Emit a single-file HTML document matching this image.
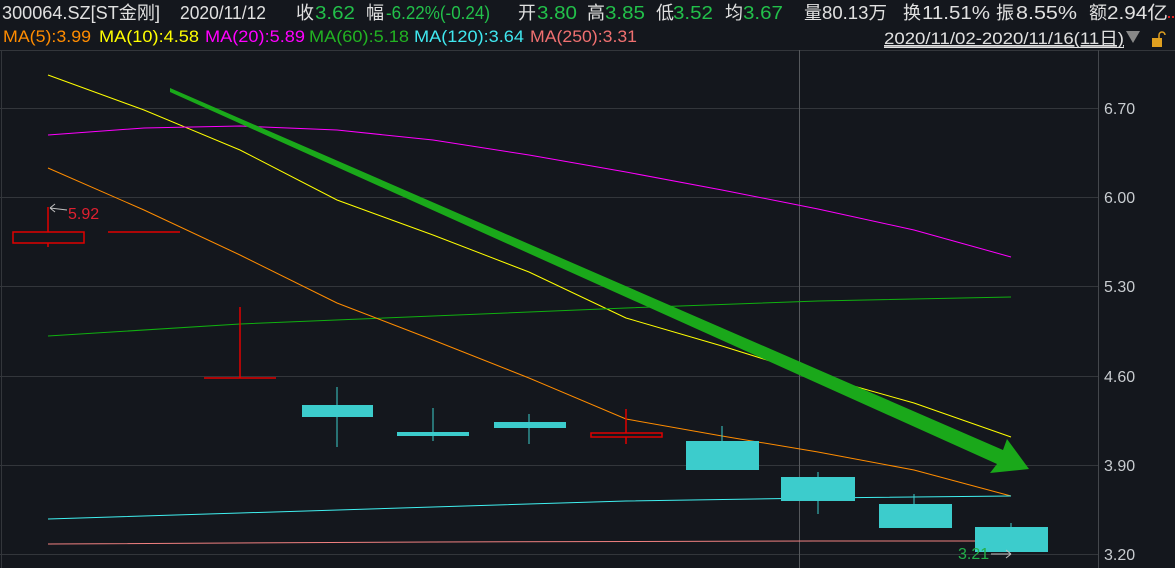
<!DOCTYPE html>
<html><head><meta charset="utf-8"><style>
body{margin:0;background:#14171d;width:1175px;height:568px;overflow:hidden;font-family:"Liberation Sans","Noto Sans CJK SC",sans-serif;}
svg{position:absolute;left:0;top:0}
</style></head><body>
<svg width="1175" height="568" xmlns="http://www.w3.org/2000/svg" font-family="Liberation Sans, Noto Sans CJK SC, sans-serif">
<rect width="1175" height="568" fill="#14171d"/>
<g font-size="18" fill="#e0e0e0">
<text x="2" y="19" textLength="158" lengthAdjust="spacingAndGlyphs">300064.SZ[ST金刚]</text>
<text x="180" y="19" textLength="86" lengthAdjust="spacingAndGlyphs">2020/11/12</text>
<text x="296" y="19">收</text><text x="315" y="19" fill="#22c04a" textLength="40" lengthAdjust="spacingAndGlyphs">3.62</text>
<text x="366" y="19">幅</text><text x="386" y="19" fill="#22c04a" textLength="104" lengthAdjust="spacingAndGlyphs">-6.22%(-0.24)</text>
<text x="518" y="19">开</text><text x="537" y="19" fill="#22c04a" textLength="40" lengthAdjust="spacingAndGlyphs">3.80</text>
<text x="587" y="19">高</text><text x="605" y="19" fill="#22c04a" textLength="40" lengthAdjust="spacingAndGlyphs">3.85</text>
<text x="656" y="19">低</text><text x="673" y="19" fill="#22c04a" textLength="40" lengthAdjust="spacingAndGlyphs">3.52</text>
<text x="725" y="19">均</text><text x="743" y="19" fill="#22c04a" textLength="40" lengthAdjust="spacingAndGlyphs">3.67</text>
<text x="804" y="19">量</text><text x="822" y="19" textLength="65" lengthAdjust="spacingAndGlyphs">80.13万</text>
<text x="903" y="19">换</text><text x="922" y="19" textLength="68" lengthAdjust="spacingAndGlyphs">11.51%</text>
<text x="996" y="19">振</text><text x="1016" y="19" textLength="61" lengthAdjust="spacingAndGlyphs">8.55%</text>
<text x="1089" y="19">额</text><text x="1107" y="19" textLength="61" lengthAdjust="spacingAndGlyphs">2.94亿</text>
</g>
<rect x="1168" y="16" width="2" height="2" fill="#e02020"/><rect x="1172" y="16" width="2" height="2" fill="#e02020"/>
<g font-size="17">
<text x="3" y="42" fill="#ff8c00" textLength="88" lengthAdjust="spacingAndGlyphs">MA(5):3.99</text>
<text x="99" y="42" fill="#ffff00" textLength="100" lengthAdjust="spacingAndGlyphs">MA(10):4.58</text>
<text x="205" y="42" fill="#ff00ff" textLength="100" lengthAdjust="spacingAndGlyphs">MA(20):5.89</text>
<text x="309" y="42" fill="#22b322" textLength="100" lengthAdjust="spacingAndGlyphs">MA(60):5.18</text>
<text x="414" y="42" fill="#40e8f0" textLength="110" lengthAdjust="spacingAndGlyphs">MA(120):3.64</text>
<text x="530" y="42" fill="#f07070" textLength="107" lengthAdjust="spacingAndGlyphs">MA(250):3.31</text>
<text x="884" y="44" fill="#e0e0e0" textLength="240" lengthAdjust="spacingAndGlyphs" text-decoration="underline">2020/11/02-2020/11/16(11日)</text>
</g>
<line x1="884" y1="47.5" x2="1124" y2="47.5" stroke="#e0e0e0"/>
<path d="M1126 31 L1140 31 L1133 43 Z" fill="#888"/>
<rect x="1152" y="38" width="10" height="9" fill="#e0a020"/>
<path d="M1159 38 V35 a3 3 0 0 1 6 0" stroke="#e0a020" stroke-width="1.5" fill="none"/>
<g stroke="#33363b" stroke-width="1">
<line x1="0" y1="50.5" x2="1175" y2="50.5"/>
<line x1="1.5" y1="50" x2="1.5" y2="568"/>
<line x1="0" y1="108.5" x2="1098" y2="108.5"/>
<line x1="0" y1="197.5" x2="1098" y2="197.5"/>
<line x1="0" y1="286.5" x2="1098" y2="286.5"/>
<line x1="0" y1="376.5" x2="1098" y2="376.5"/>
<line x1="0" y1="465.5" x2="1098" y2="465.5"/>
<line x1="0" y1="554.5" x2="1098" y2="554.5"/>
</g>
<line x1="1098.5" y1="50" x2="1098.5" y2="568" stroke="#44474c"/>
<line x1="799.5" y1="50" x2="799.5" y2="568" stroke="#55585c"/>
<g font-size="16" fill="#c8ccd0">
<text x="1104" y="114">6.70</text>
<text x="1104" y="203">6.00</text>
<text x="1104" y="292">5.30</text>
<text x="1104" y="382">4.60</text>
<text x="1104" y="471">3.90</text>
<text x="1104" y="560">3.20</text>
</g>
<g fill="none" stroke-width="1">
<polyline stroke="#ffff00" points="48,75 144,110 240,150 337,200 433,235 529,272 626,318 722,346 818,376 914,403 1011,437"/>
<polyline stroke="#ff00ff" points="48,135 144,128 240,126 337,130 433,140 529,155 626,172 722,190 818,209 914,230 1011,257"/>
<polyline stroke="#10b010" points="48,336 240,324 433,316 626,308 818,301 1011,297"/>
<polyline stroke="#ff8c00" points="48,168 144,210 240,255 337,303 433,340 529,378 626,419 722,436 818,452 914,470 1011,496"/>
<polyline stroke="#40f0f0" points="48,519 240,513 433,507 626,501 818,498 1011,496"/>
<polyline stroke="#f08080" points="48,544 433,542 818,541 1011,541"/>
</g>
<g stroke="#e00000" fill="none" stroke-width="1.5">
<line x1="48" y1="207" x2="48" y2="232"/><line x1="48" y1="243" x2="48" y2="247"/>
<rect x="13" y="232" width="71" height="11"/>
<line x1="108" y1="232" x2="180" y2="232"/>
<line x1="240" y1="307" x2="240" y2="378"/><line x1="204" y1="378" x2="276" y2="378"/>
<line x1="626" y1="409" x2="626" y2="433"/><line x1="626" y1="437" x2="626" y2="444"/>
<rect x="591" y="433" width="71" height="4"/>
</g>
<g fill="#3ccccc" stroke="#3ccccc">
<line x1="337" y1="387" x2="337" y2="447"/><rect x="302" y="405" width="71" height="12" stroke="none"/>
<line x1="433" y1="408" x2="433" y2="441"/><rect x="397" y="432" width="72" height="4" stroke="none"/>
<line x1="529" y1="414" x2="529" y2="444"/><rect x="494" y="422" width="72" height="6" stroke="none"/>
<line x1="722" y1="426" x2="722" y2="441"/><rect x="686" y="441" width="73" height="29" stroke="none"/>
<line x1="818" y1="472" x2="818" y2="514"/><rect x="781" y="477" width="74" height="24" stroke="none"/>
<line x1="914" y1="494" x2="914" y2="504"/><rect x="879" y="504" width="73" height="24" stroke="none"/>
<line x1="1011" y1="523" x2="1011" y2="527"/><rect x="975" y="527" width="73" height="25" stroke="none"/>
</g>
<path d="M67 210 L50 208 M50 208 L55 204 M50 208 L55 212" stroke="#c0c0c0" fill="none"/>
<text x="68" y="219" font-size="16" fill="#e02030">5.92</text>
<text x="958" y="559" font-size="16" fill="#22b04a">3.21</text>
<path d="M991 554 L1011 554 M1011 554 L1006 550 M1011 554 L1006 558" stroke="#c0c0c0" fill="none"/>
<polygon fill="#1aa81a" points="170,88 1003,450 1007,439 1029,469 990,473 997,464 170,92"/>
</svg>
</body></html>
